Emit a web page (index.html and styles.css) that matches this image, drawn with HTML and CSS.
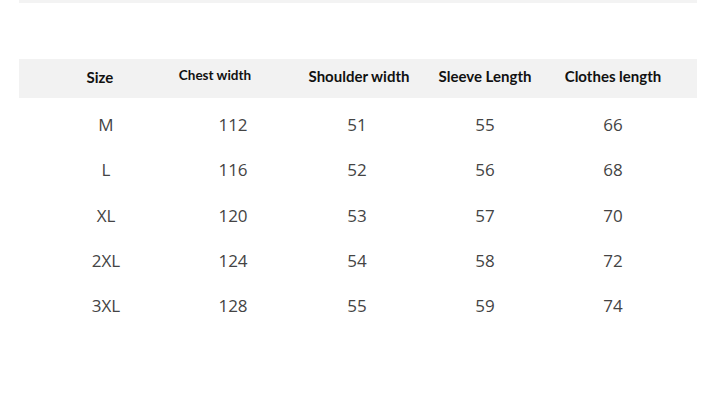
FILE: index.html
```html
<!DOCTYPE html>
<html>
<head>
<meta charset="utf-8">
<link rel="stylesheet" href="styles.css">
</head>
<body>
<div class="page">
  <div class="top-strip"></div>
  <div class="table">
    <div class="row head">
      <div class="cell c1"><span>Size</span></div>
      <div class="cell c2"><span>Chest width</span></div>
      <div class="cell c3"><span>Shoulder width</span></div>
      <div class="cell c4"><span>Sleeve Length</span></div>
      <div class="cell c5"><span>Clothes length</span></div>
    </div>
    <div class="body">
      <div class="row data">
        <div class="cell">M</div><div class="cell">112</div><div class="cell">51</div><div class="cell">55</div><div class="cell">66</div>
      </div>
      <div class="row data">
        <div class="cell">L</div><div class="cell">116</div><div class="cell">52</div><div class="cell">56</div><div class="cell">68</div>
      </div>
      <div class="row data">
        <div class="cell">XL</div><div class="cell">120</div><div class="cell">53</div><div class="cell">57</div><div class="cell">70</div>
      </div>
      <div class="row data">
        <div class="cell">2XL</div><div class="cell">124</div><div class="cell">54</div><div class="cell">58</div><div class="cell">72</div>
      </div>
      <div class="row data">
        <div class="cell">3XL</div><div class="cell">128</div><div class="cell">55</div><div class="cell">59</div><div class="cell">74</div>
      </div>
    </div>
  </div>
</div>
</body>
</html>
```

FILE: styles.css
```css
html, body {
  margin: 0;
  padding: 0;
  background: #ffffff;
}
.page {
  width: 709px;
  height: 408px;
  padding: 0 12px 0 19px;
  box-sizing: border-box;
}
.top-strip {
  height: 3px;
  width: 678px;
  background: #f3f3f3;
}
.table {
  margin-top: 56px;
  width: 678px;
}
.row {
  display: grid;
  grid-template-columns: 174px 80px 168px 88px 168px;
}
.cell {
  display: flex;
  justify-content: center;
  align-items: center;
  white-space: nowrap;
}
.head {
  height: 39px;
  background: #f2f2f2;
  font-family: "Lato", "Open Sans", sans-serif;
  font-weight: 700;
  font-size: 15px;
  color: #111111;
}
.head .cell { padding-bottom: 6px; }
.head .c1 { padding-right: 12px; padding-bottom: 4px; }
.head .c2 { padding-right: 36px; font-size: 13.5px; padding-bottom: 7px; }
.head .c3 { padding-left: 4px; }
.body {
  padding-top: 4px;
}
.data {
  height: 45.25px;
  font-family: "Open Sans", sans-serif;
  font-size: 17px;
  color: #444444;
}
```
